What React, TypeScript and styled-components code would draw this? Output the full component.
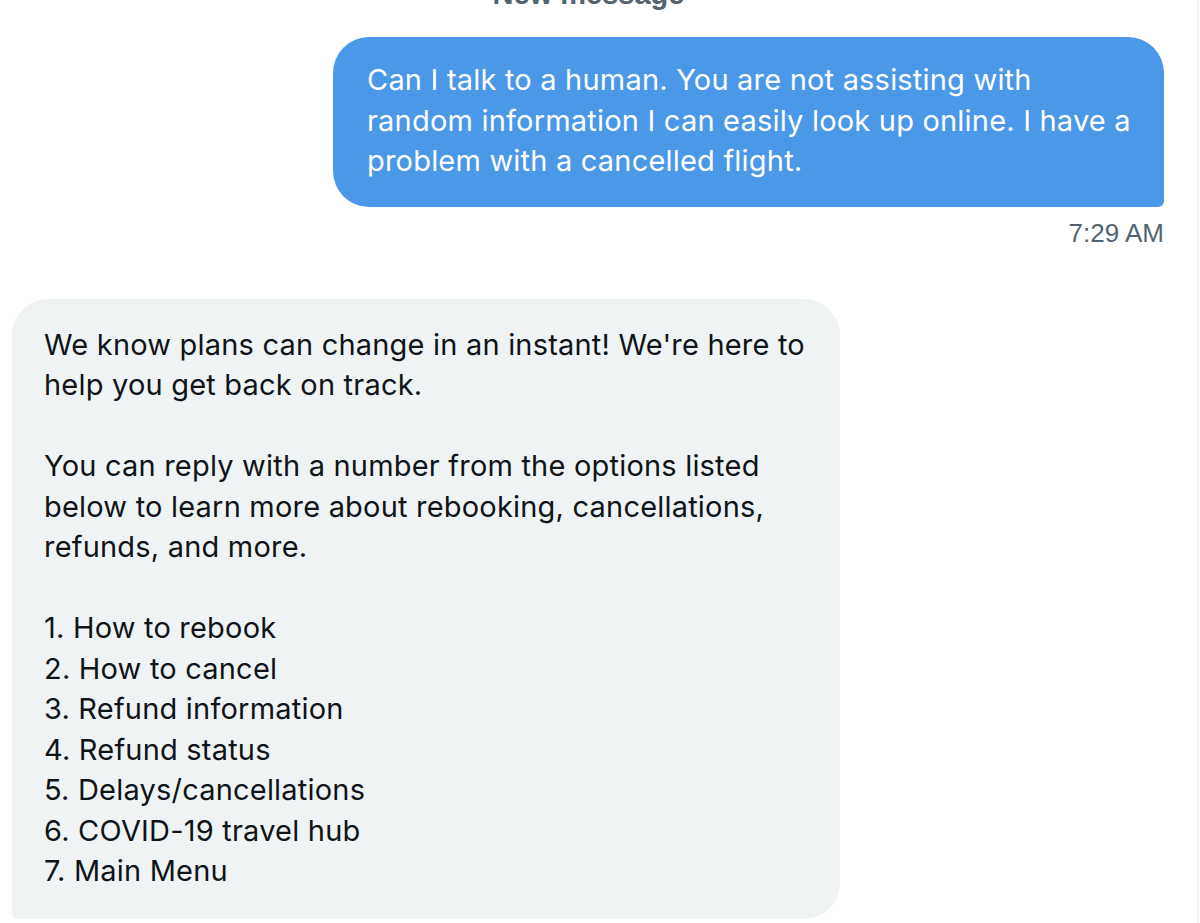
import React from "react";
import styled, { createGlobalStyle } from "styled-components";

const Global = createGlobalStyle`
  html, body { margin: 0; padding: 0; background: #ffffff; }
  body { font-family: Inter, "Liberation Sans", Arial, sans-serif; }
`;

const Page = styled.div`
  width: 1197px;
  height: 923px;
  overflow: hidden;
  border-right: 2px solid #eff3f4;
  display: flex;
  flex-direction: column;
  background: #ffffff;
`;

const TopLabel = styled.div`
  margin-top: -19px;
  height: 26px;
  text-align: center;
  font-family: "Liberation Sans", Arial, sans-serif;
  font-size: 29px;
  font-weight: 700;
  color: #536471;
  line-height: 26px;
  transform: translateX(-10px);
`;

const Row = styled.div<{ $align: "start" | "end" }>`
  display: flex;
  flex-direction: column;
  align-items: ${(p) => (p.$align === "end" ? "flex-end" : "flex-start")};
  padding: 0 ${(p) => (p.$align === "end" ? "33px" : "0")} 0 ${(p) => (p.$align === "end" ? "0" : "12px")};
`;

const Bubble = styled.div<{ $mine?: boolean }>`
  box-sizing: border-box;
  width: ${(p) => (p.$mine ? "831px" : "828px")};
  background: ${(p) => (p.$mine ? "#4b98e8" : "#eff3f4")};
  color: ${(p) => (p.$mine ? "#ffffff" : "#0f1419")};
  border-radius: ${(p) => (p.$mine ? "36px 36px 6px 36px" : "36px 36px 36px 6px")};
  padding: ${(p) => (p.$mine ? "23px 20px 25px 34px" : "26px 20px 27px 32px")};
  font-size: 29px;
  line-height: 40.5px;
  white-space: pre;
  letter-spacing: 0.2px;
`;

const Time = styled.div`
  margin-top: 11px;
  font-family: "Liberation Sans", Arial, sans-serif;
  font-size: 26px;
  line-height: 30px;
  color: #536471;
`;

const Line = styled.div``;

const botLines = [
  "We know plans can change in an instant! We're here to",
  "help you get back on track.",
  "",
  "You can reply with a number from the options listed",
  "below to learn more about rebooking, cancellations,",
  "refunds, and more.",
  "",
  "1. How to rebook",
  "2. How to cancel",
  "3. Refund information",
  "4. Refund status",
  "5. Delays/cancellations",
  "6. COVID-19 travel hub",
  "7. Main Menu",
];

const userLines = [
  "Can I talk to a human. You are not assisting with",
  "random information I can easily look up online. I have a",
  "problem with a cancelled flight.",
];

export default function App() {
  return (
    <>
      <Global />
      <Page>
        <TopLabel>New message</TopLabel>
        <Row $align="end" style={{ marginTop: 30 }}>
          <Bubble $mine>
            {userLines.map((l, i) => (
              <Line key={i}>{l}</Line>
            ))}
          </Bubble>
          <Time>7:29 AM</Time>
        </Row>
        <Row $align="start" style={{ marginTop: 51 }}>
          <Bubble>
            {botLines.map((l, i) => (
              <Line key={i}>{l || "\u00a0"}</Line>
            ))}
          </Bubble>
        </Row>
      </Page>
    </>
  );
}
